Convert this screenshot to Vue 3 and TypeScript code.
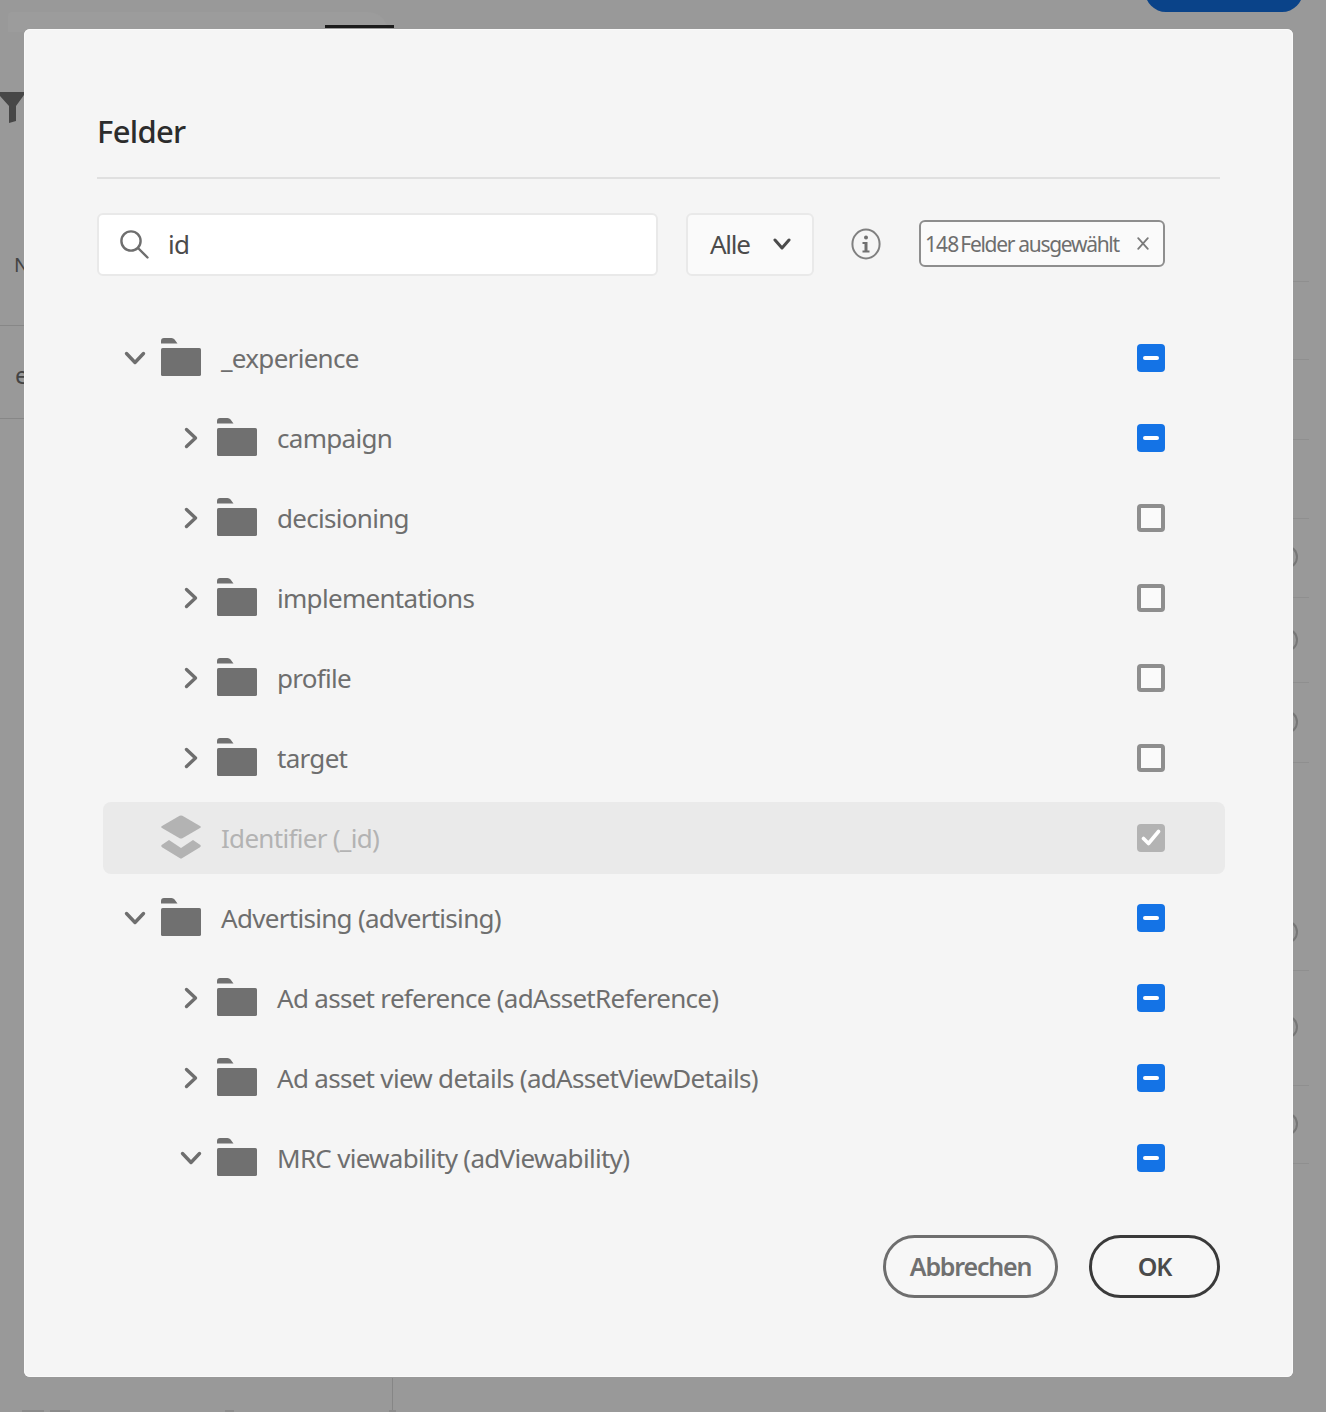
<script setup lang="ts">
interface Row {
  label: string
  level: 1 | 2
  icon: 'folder' | 'layers'
  open?: boolean
  state: 'mixed' | 'empty' | 'disabled'
}

const rows: Row[] = [
  { label: '_experience', level: 1, icon: 'folder', open: true, state: 'mixed' },
  { label: 'campaign', level: 2, icon: 'folder', state: 'mixed' },
  { label: 'decisioning', level: 2, icon: 'folder', state: 'empty' },
  { label: 'implementations', level: 2, icon: 'folder', state: 'empty' },
  { label: 'profile', level: 2, icon: 'folder', state: 'empty' },
  { label: 'target', level: 2, icon: 'folder', state: 'empty' },
  { label: 'Identifier (_id)', level: 1, icon: 'layers', state: 'disabled' },
  { label: 'Advertising (advertising)', level: 1, icon: 'folder', open: true, state: 'mixed' },
  { label: 'Ad asset reference (adAssetReference)', level: 2, icon: 'folder', state: 'mixed' },
  { label: 'Ad asset view details (adAssetViewDetails)', level: 2, icon: 'folder', state: 'mixed' },
  { label: 'MRC viewability (adViewability)', level: 2, icon: 'folder', open: true, state: 'mixed' },
]

const ticks = [281, 359, 439, 518, 597, 682, 762, 970, 1085, 1163]
const arcs = [557, 640, 722, 932, 1027, 1124]
const bottomBits = [{ x: 22, w: 22 }, { x: 50, w: 20 }, { x: 225, w: 9 }, { x: 389, w: 7 }]
</script>

<template>
  <div class="page">
    <div class="backdrop" aria-hidden="true">
      <div class="patch"></div>
      <div class="top-rule"></div>
      <div class="primary"></div>
      <svg class="funnel" width="24" height="32" viewBox="0 0 24 32">
        <path d="M0 0H24V3L16 14V29L9 31V14L0 4Z" fill="#474747" />
      </svg>
      <span class="frag frag-n">N</span>
      <span class="frag frag-e">e</span>
      <div class="left-rule rule-a"></div>
      <div class="left-rule rule-b"></div>
      <div class="col-rule"></div>
      <div v-for="t in ticks" :key="t" class="tick" :style="{ top: t + 'px' }"></div>
      <div v-for="a in arcs" :key="a" class="arc" :style="{ top: a - 12 + 'px' }"></div>
      <div v-for="b in bottomBits" :key="b.x" class="bit" :style="{ left: b.x + 'px', width: b.w + 'px' }"></div>
    </div>

    <section class="dialog">
      <h1 class="title">Felder</h1>
      <div class="divider"></div>

      <div class="toolbar">
        <div class="search">
          <svg class="search-icon" width="30" height="30" viewBox="0 0 30 30" fill="none" stroke="#6e6e6e" stroke-width="2.4" stroke-linecap="round">
            <circle cx="12" cy="12" r="9.6" />
            <path d="M19 19L28.5 28.5" />
          </svg>
          <span class="search-text">id</span>
        </div>
        <div class="select">
          <span>Alle</span>
          <svg width="18" height="12" viewBox="0 0 18 12" fill="none" stroke="#4b4b4b" stroke-width="3" stroke-linecap="round" stroke-linejoin="round">
            <path d="M2 2L9 10L16 2" />
          </svg>
        </div>
        <svg class="info" width="30" height="32" viewBox="0 0 30 32" fill="none">
          <ellipse cx="15" cy="16" rx="13.6" ry="14.4" stroke="#808080" stroke-width="2" />
          <circle cx="15" cy="9.5" r="2" fill="#707070" />
          <path d="M11.5 14H16.5V22.5H18.5V24.5H11.5V22.5H13.5V16H11.5Z" fill="#707070" />
        </svg>
        <div class="tag">
          <span class="tag-num">148</span><span class="tag-text">Felder ausgewählt</span>
          <svg class="tag-x" width="12" height="13" viewBox="0 0 12 13" fill="none" stroke="#7a7a7a" stroke-width="1.8" stroke-linecap="round">
            <path d="M1.2 1.2L10.8 11.8M10.8 1.2L1.2 11.8" />
          </svg>
        </div>
      </div>

      <ul class="tree">
        <li v-for="row in rows" :key="row.label" class="row" :class="[`level-${row.level}`, { disabled: row.state === 'disabled' }]">
          <span class="chevron">
            <template v-if="row.icon === 'folder'">
              <svg v-if="row.open" width="22" height="14" viewBox="0 0 22 14" fill="none" stroke="#6e6e6e" stroke-width="3.4" stroke-linecap="round" stroke-linejoin="round">
                <path d="M2.5 2.5L11 11.5L19.5 2.5" />
              </svg>
              <svg v-else width="14" height="22" viewBox="0 0 14 22" fill="none" stroke="#6e6e6e" stroke-width="3.4" stroke-linecap="round" stroke-linejoin="round">
                <path d="M2.5 2.5L11.5 11L2.5 19.5" />
              </svg>
            </template>
          </span>
          <svg v-if="row.icon === 'folder'" class="kind" width="40" height="38" viewBox="0 0 40 38" fill="#707070">
            <path d="M0 5.5V3Q0 0 3 0H10.5Q12.5 0 13.6 1.6L16.5 5.5Z" />
            <rect y="10" width="40" height="28" rx="1.6" />
          </svg>
          <svg v-else class="kind" width="40" height="44" viewBox="0 0 40 44" fill="#b3b3b3">
            <path d="M18.6 .8Q20 0 21.4 .8L39 11Q40.6 12 39 13L21.4 23.2Q20 24 18.6 23.2L1 13Q-.6 12 1 11Z" />
            <path d="M1 29.8L8 25L20 33L32 25L39 29.8Q40.5 31 39 32.2L21.4 43Q20 44 18.6 43L1 32.2Q-.5 31 1 29.8Z" />
          </svg>
          <span class="label">{{ row.label }}</span>
          <span class="check" :class="`check-${row.state}`">
            <svg v-if="row.state === 'disabled'" width="20" height="18" viewBox="0 0 20 18" fill="none" stroke="#fff" stroke-width="3.6" stroke-linecap="round" stroke-linejoin="round">
              <path d="M2.5 9.5L7.5 14.5L17.5 2.5" />
            </svg>
          </span>
        </li>
      </ul>

      <div class="actions">
        <button class="btn btn-cancel" type="button">Abbrechen</button>
        <button class="btn btn-ok" type="button">OK</button>
      </div>
    </section>
  </div>
</template>

<style>
body { margin: 0; background: #999; }
</style>

<style scoped>
.page {
  position: relative;
  width: 1326px;
  height: 1412px;
  overflow: hidden;
  background: #999;
  padding: 29px 0 0 24px;
  box-sizing: border-box;
  font-family: "Noto Sans", "Open Sans", sans-serif;
}
.backdrop { position: absolute; inset: 0; }
.patch {
  position: absolute; left: 8px; top: 12px; width: 380px; height: 20px;
  background: #9c9c9c; border-radius: 8px 40px 0 0;
}
.top-rule { position: absolute; left: 325px; top: 25px; width: 69px; height: 3px; background: #1c1c1c; }
.primary {
  position: absolute; left: 1145px; top: -30px; width: 158px; height: 42px;
  border-radius: 21px; background: #0a4389;
}
.funnel { position: absolute; left: 0; top: 92px; }
.frag { position: absolute; color: #444; font-size: 20px; line-height: 24px; }
.frag-n { left: 14px; top: 253px; }
.frag-e { left: 15px; top: 363px; font-size: 24px; }
.left-rule { position: absolute; left: 0; width: 24px; height: 1px; background: #878787; }
.rule-a { top: 325px; }
.rule-b { top: 418px; }
.col-rule { position: absolute; left: 392px; top: 1378px; width: 1px; height: 34px; background: #868686; }
.tick { position: absolute; left: 1293px; width: 16px; height: 1px; background: #8f8f8f; }
.arc {
  position: absolute; left: 1286px; width: 12px; height: 24px; box-sizing: border-box;
  border: 2px solid #777; border-left: 0; border-radius: 0 12px 12px 0;
}
.bit { position: absolute; top: 1410px; height: 2px; background: #8a8a8a; }

.dialog {
  position: relative;
  box-sizing: border-box;
  width: 1269px;
  height: 1348px;
  padding: 0 73px;
  background: #f5f5f5;
  border-radius: 6px;
  box-shadow: 0 0 0 1px #fafafa inset;
}
.title {
  margin: 0;
  padding-top: 82px;
  font-size: 31px;
  line-height: 40px;
  font-weight: 500;
  color: #2c2c2c;
  letter-spacing: -0.7px;
}
.divider { margin-top: 26px; height: 2px; background: #e0e0e0; }

.toolbar { display: flex; align-items: center; margin-top: 34px; height: 63px; }
.search {
  box-sizing: border-box; display: flex; align-items: center; width: 561px; height: 63px;
  padding: 0 0 2px 20px; background: #fff; border: 2px solid #e9e9e9; border-radius: 6px;
}
.search-text { margin-left: 19px; font-size: 26px; color: #4b4b4b; letter-spacing: -0.6px; }
.select {
  box-sizing: border-box; display: flex; align-items: center; justify-content: space-between;
  width: 128px; height: 63px; margin-left: 28px; padding: 0 21px 2px 22px;
  background: #fafafa; border: 2px solid #e9e9e9; border-radius: 6px;
  font-size: 26px; color: #4b4b4b; letter-spacing: -1.3px;
}
.info { margin-left: 37px; flex: none; margin-top: -1px; }
.tag {
  box-sizing: border-box; display: flex; align-items: center; width: 246px; height: 47px;
  margin: -2px 0 0 38px; padding-left: 4px; background: #fafafa;
  border: 2px solid #8e8e8e; border-radius: 6px; font-size: 21px; color: #6e6e6e; white-space: nowrap;
}
.tag-num { letter-spacing: -0.9px; }
.tag-text { margin-left: 2px; letter-spacing: -1.3px; }
.tag-x { margin-left: auto; margin-right: 14px; flex: none; }

.tree { list-style: none; margin: 42px -5px 0 6px; padding: 0; }
.row { position: relative; display: flex; align-items: center; height: 80px; box-sizing: border-box; padding-right: 60px; }
.row.disabled::before {
  content: ""; position: absolute; inset: 4px 0; background: #eaeaea; border-radius: 8px;
}
.row > * { position: relative; }
.chevron { display: flex; align-items: center; justify-content: center; width: 28px; height: 28px; flex: none; }
.level-1 .chevron { margin-left: 18px; }
.level-2 .chevron { margin-left: 74px; }
.kind { margin-left: 12px; flex: none; transform: translateY(-1px); }
.label {
  margin-left: 20px; font-size: 26px; line-height: 36px; color: #6e6e6e;
  letter-spacing: -0.7px; white-space: nowrap;
}
.disabled .label { color: #b3b3b3; }
.check {
  box-sizing: border-box; display: flex; align-items: center; justify-content: center;
  width: 28px; height: 28px; margin-left: auto; border-radius: 4px; flex: none;
}
.check-mixed { background: #1473e6; }
.check-mixed::after { content: ""; width: 16px; height: 4px; border-radius: 2px; background: #fff; }
.check-empty { background: #fafafa; border: 4px solid #8e8e8e; }
.check-disabled { background: #b3b3b3; }

.actions { display: flex; justify-content: flex-end; gap: 31px; margin-top: 37px; }
.btn {
  box-sizing: border-box; height: 63px; padding: 0 0 2px; background: #f7f7f7; border-radius: 32px;
  font-family: inherit; font-size: 25px; font-weight: 600; letter-spacing: -1.2px;
}
.btn-cancel { width: 175px; border: 3px solid #6e6e6e; color: #707070; }
.btn-ok { width: 131px; border: 3px solid #3a3a3a; color: #4b4b4b; }
</style>
